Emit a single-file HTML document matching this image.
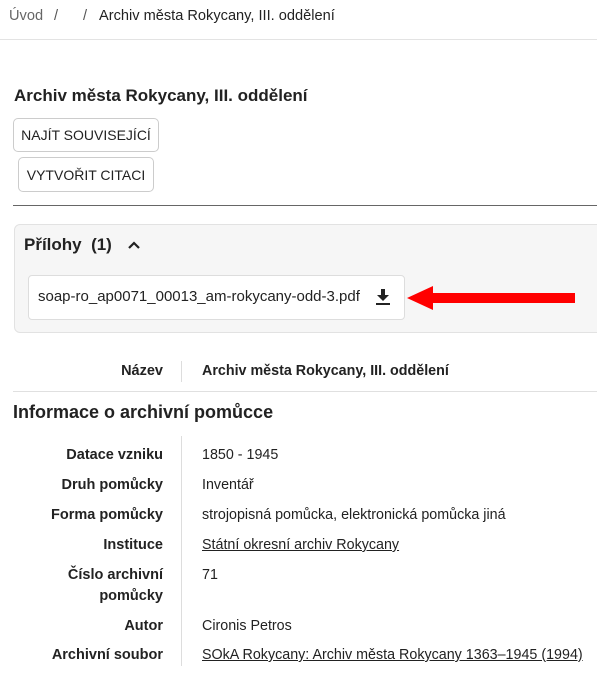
<!DOCTYPE html>
<html><head><meta charset="utf-8"><style>
body{margin:0;width:597px;height:674px;overflow:hidden;background:#fff;font-family:"Liberation Sans",Arial,sans-serif;color:#222;position:relative}
.a{position:absolute;white-space:nowrap}
.btn{position:absolute;border:1px solid #ccc;border-radius:5px;font-size:14px;color:#222;box-sizing:border-box;display:flex;align-items:center;justify-content:center;white-space:nowrap}
.l{position:absolute;right:434px;font-weight:bold;font-size:14.5px;text-align:right;line-height:21px}
.v{position:absolute;left:202px;font-size:14.3px;line-height:21px;white-space:nowrap}
u{text-decoration:underline}
</style></head><body>
<div class="a" style="left:9px;top:8px;font-size:14.6px;color:#666">Úvod</div>
<div class="a" style="left:54px;top:8px;font-size:14.6px;color:#555">/</div>
<div class="a" style="left:83px;top:8px;font-size:14.6px;color:#555">/</div>
<div class="a" style="left:99px;top:8px;font-size:14.6px;color:#222">Archiv města Rokycany, III. oddělení</div>
<div class="a" style="left:0;top:39px;width:597px;height:1px;background:#e3e3e3"></div>
<div class="a" style="left:14px;top:86px;font-size:17px;font-weight:bold">Archiv města Rokycany, III. oddělení</div>
<div class="btn" style="left:13px;top:118px;width:146px;height:34px">NAJÍT SOUVISEJÍCÍ</div>
<div class="btn" style="left:18px;top:157px;width:136px;height:35px">VYTVOŘIT CITACI</div>
<div class="a" style="left:13px;top:205px;width:584px;height:1px;background:#666"></div>
<div class="a" style="left:14px;top:224px;width:600px;height:109px;background:#f6f6f6;border:1px solid #e2e2e2;border-radius:6px;box-sizing:border-box"></div>
<div class="a" style="left:24px;top:235px;font-size:17px;font-weight:bold">Přílohy&nbsp;&nbsp;(1)</div>
<svg class="a" style="left:127px;top:239px" width="14" height="12" viewBox="0 0 14 12"><path d="M2 9 L7 4 L12 9" fill="none" stroke="#222" stroke-width="2.2"/></svg>
<div class="a" style="left:28px;top:275px;width:377px;height:45px;background:#fff;border:1px solid #ddd;border-radius:4px;box-sizing:border-box"></div>
<div class="a" style="left:38px;top:288px;font-size:15px">soap-ro_ap0071_00013_am-rokycany-odd-3.pdf</div>
<svg class="a" style="left:374px;top:288px" width="18" height="18" viewBox="0 0 18 18"><path d="M7 1h4v6h4l-6 6-6-6h4z" fill="#222"/><rect x="2" y="15" width="14" height="2" fill="#222"/></svg>
<svg class="a" style="left:406px;top:285px" width="172" height="26" viewBox="0 0 172 26"><path d="M1 13 L27 1 L27 8 L169 8 L169 18 L27 18 L27 25 Z" fill="#f00"/></svg>
<div class="l" style="top:361px">Název</div>
<div class="a" style="left:181px;top:361px;width:1px;height:21px;background:#ddd"></div>
<div class="v" style="top:361px;font-weight:bold">Archiv města Rokycany, III. oddělení</div>
<div class="a" style="left:13px;top:391px;width:584px;height:1px;background:#e0e0e0"></div>
<div class="a" style="left:13px;top:402px;font-size:18px;font-weight:bold;color:#222">Informace o archivní pomůcce</div>
<div class="a" style="left:181px;top:436px;width:1px;height:230px;background:#ddd"></div>
<div class="l" style="top:445px">Datace vzniku</div><div class="v" style="top:445px">1850 - 1945</div>
<div class="l" style="top:475px">Druh pomůcky</div><div class="v" style="top:475px">Inventář</div>
<div class="l" style="top:505px">Forma pomůcky</div><div class="v" style="top:505px">strojopisná pomůcka, elektronická pomůcka jiná</div>
<div class="l" style="top:535px">Instituce</div><div class="v" style="top:535px"><u>Státní okresní archiv Rokycany</u></div>
<div class="l" style="top:565px">Číslo archivní<br>pomůcky</div><div class="v" style="top:565px">71</div>
<div class="l" style="top:616px">Autor</div><div class="v" style="top:616px">Cironis Petros</div>
<div class="l" style="top:645px">Archivní soubor</div><div class="v" style="top:645px"><u>SOkA Rokycany: Archiv města Rokycany 1363–1945 (1994)</u></div>
</body></html>
